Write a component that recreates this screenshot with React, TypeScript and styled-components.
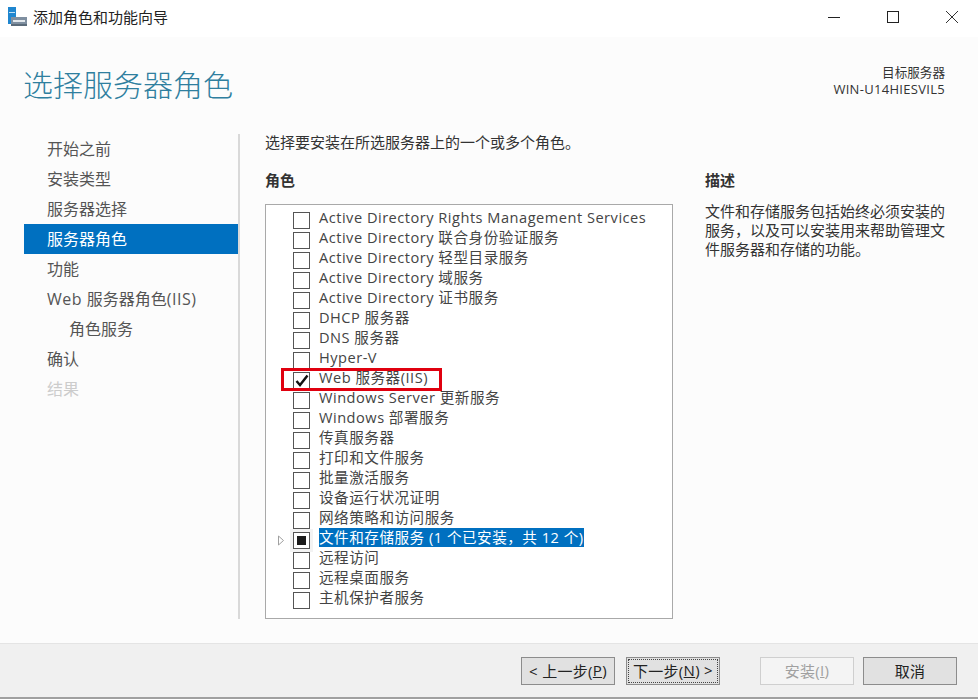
import React from "react";
import styled, { createGlobalStyle } from "styled-components";

const Global = createGlobalStyle`
  html, body { margin: 0; padding: 0; background: #fff; }
  body { font-family: "Open Sans", "Noto Sans CJK SC", sans-serif; color: #333; }
`;
const Windowed = styled.div`
  width: 978px; height: 699px; display: flex; flex-direction: column; overflow: hidden;
`;
const TitleBar = styled.div`
  height: 37px; flex: none; background: #fff; display: flex; align-items: center; gap: 15px; padding: 0 4px 3px 8px; box-sizing: border-box;
`;
const TitleText = styled.span`
  font-size: 15px; color: #222; margin-left: -10px; flex: 1; margin-top: -1px;
`;
const WinButton = styled.div`
  width: 44px; height: 30px; display: flex; align-items: center; justify-content: center;
`;
const Body = styled.div`
  flex: 1; min-height: 0; background: #fcfcfc; display: flex; flex-direction: column; padding: 0 33px 24px 24px;
`;
const Header = styled.div`
  height: 97px; flex: none; display: flex; justify-content: space-between; align-items: flex-start;
`;
const Heading = styled.h1`
  margin: 30px 0 0 -1px; font-size: 30px; font-weight: 300; line-height: 36px; color: #2f7f9f;
`;
const Target = styled.div`
  margin-top: 27px; text-align: right; line-height: 17px; color: #333;
`;
const TargetLabel = styled.div`
  font-size: 12.6px;
`;
const TargetName = styled.div`
  font-size: 13px; letter-spacing: 0.3px;
`;
const Side = styled.nav`
  width: 216px; flex: none; box-sizing: border-box; border-right: 2px solid #d9d9d9;
`;
const Columns = styled.div`
  flex: 1; min-height: 0; display: flex;
`;
const SideItem = styled.div<{ $active?: boolean; $disabled?: boolean; $indent?: boolean }>`
  height: 30px; width: 214px; line-height: 30px; font-size: 16px; box-sizing: border-box;
  padding-left: ${(p) => (p.$indent ? 45 : 23)}px;
  background: ${(p) => (p.$active ? "#0070c0" : "transparent")};
  color: ${(p) => (p.$active ? "#fff" : p.$disabled ? "#ccc" : "#555")};
`;
const Latin = styled.span`
  letter-spacing: 0.5px;
`;
const Main = styled.div`
  width: 408px; margin-left: 25px; flex: none; display: flex; flex-direction: column;
`;
const Intro = styled.div`
  font-size: 15px; line-height: 20px; color: #333; margin-bottom: 18px; margin-top: -2px;
`;
const Label = styled.div`
  font-size: 15px; font-weight: 700; line-height: 20px; color: #333;
`;
const ListBox = styled.div`
  position: relative; margin-top: 14px; flex: 1; border: 1px solid #a9a9a9; background: #fff; box-sizing: border-box; padding-top: 4px;
`;
const Row = styled.div`
  height: 20px; display: flex; align-items: center; position: relative; padding-left: 27px;
`;
const Check = styled.span<{ $hover?: boolean }>`
  width: 17px; height: 17px; flex: none; box-sizing: border-box; border: 1px solid #555; background: #fff;
  display: flex; align-items: center; justify-content: center; margin: 2px 9px 0 0;
  ${(p) => (p.$hover ? "box-shadow: 0 0 0 3px #f3f3f3;" : "")}
`;
const Square = styled.span`
  width: 9px; height: 9px; background: #1a1a1a;
`;
const RowText = styled.span<{ $sel?: boolean }>`
  font-size: 14.6px; letter-spacing: 0.5px; line-height: 19px; white-space: nowrap; margin-bottom: 4px;
  color: ${(p) => (p.$sel ? "#fff" : "#444")};
  background: ${(p) => (p.$sel ? "#0070c0" : "transparent")};
`;
const Arrow = styled.svg`
  position: absolute; left: 11px; top: 6px;
`;
const Mark = styled.div`
  position: absolute; left: 15px; top: 163px; width: 161px; height: 23px; box-sizing: border-box; border: 3px solid #e0000f;
`;
const Desc = styled.div`
  flex: 1; margin-left: 32px; padding-top: 36px;
`;
const DescText = styled.p`
  margin: 12px 0 0; font-size: 15px; line-height: 19px; color: #333; width: 245px;
`;
const Footer = styled.div`
  height: 56px; flex: none; box-sizing: border-box; background: #f0f0f0; border-top: 1px solid #e4e4e4; border-bottom: 2px solid #a0a0a0;
  display: flex; align-items: flex-start; padding: 13px 22px 0 521px;
`;
const Btn = styled.div<{ $disabled?: boolean; $focus?: boolean; $gap?: number }>`
  width: 94px; height: 28px; flex: none; box-sizing: border-box; margin-right: ${(p) => p.$gap ?? 0}px; padding-bottom: 2px;
  background: ${(p) => (p.$disabled ? "#f4f4f4" : "#e1e1e1")};
  border: 1px solid ${(p) => (p.$disabled ? "#cfcfcf" : "#8c8c8c")};
  color: ${(p) => (p.$disabled ? "#a0a0a0" : "#222")};
  font-size: 15px; letter-spacing: 0.3px; display: flex; align-items: center; justify-content: center; white-space: pre;
  ${(p) => (p.$focus ? "outline: 1px dotted #444; outline-offset: -3px;" : "")}
`;
const Key = styled.span`
  text-decoration: underline;
`;

const AppIcon = () => (
  <svg width="20" height="20" viewBox="0 0 20 20">
    <rect x="0" y="0" width="8" height="17" fill="#1f86cf" />
    <rect x="1" y="5" width="6" height="1" fill="#bfe0f5" />
    <rect x="3" y="10" width="16" height="9" fill="#7f8fa0" />
    <rect x="5" y="13" width="12" height="2" fill="#e3e8ec" />
    <rect x="3" y="17" width="16" height="2" fill="#5b6b7a" />
  </svg>
);

const names = [
  "Active Directory Rights Management Services",
  "Active Directory 联合身份验证服务",
  "Active Directory 轻型目录服务",
  "Active Directory 域服务",
  "Active Directory 证书服务",
  "DHCP 服务器",
  "DNS 服务器",
  "Hyper-V",
  "Web 服务器(IIS)",
  "Windows Server 更新服务",
  "Windows 部署服务",
  "传真服务器",
  "打印和文件服务",
  "批量激活服务",
  "设备运行状况证明",
  "网络策略和访问服务",
  "文件和存储服务 (1 个已安装，共 12 个)",
  "远程访问",
  "远程桌面服务",
  "主机保护者服务",
];

export default function App() {
  return (
    <Windowed>
      <Global />
      <TitleBar>
        <AppIcon />
        <TitleText>添加角色和功能向导</TitleText>
        <WinButton>
          <svg width="14" height="14" viewBox="0 0 14 14"><path d="M1 7.5h12" stroke="#222" fill="none" /></svg>
        </WinButton>
        <WinButton>
          <svg width="14" height="14" viewBox="0 0 14 14"><rect x="1.5" y="1.5" width="11" height="11" stroke="#222" fill="none" /></svg>
        </WinButton>
        <WinButton>
          <svg width="14" height="14" viewBox="0 0 14 14"><path d="M1 1l12 12M13 1L1 13" stroke="#333" fill="none" /></svg>
        </WinButton>
      </TitleBar>
      <Body>
        <Header>
          <Heading>选择服务器角色</Heading>
          <Target>
            <TargetLabel>目标服务器</TargetLabel>
            <TargetName>WIN-U14HIESVIL5</TargetName>
          </Target>
        </Header>
        <Columns>
          <Side>
            <SideItem>开始之前</SideItem>
            <SideItem>安装类型</SideItem>
            <SideItem>服务器选择</SideItem>
            <SideItem $active>服务器角色</SideItem>
            <SideItem>功能</SideItem>
            <SideItem><Latin>Web </Latin>服务器角色<Latin>(IIS)</Latin></SideItem>
            <SideItem $indent>角色服务</SideItem>
            <SideItem>确认</SideItem>
            <SideItem $disabled>结果</SideItem>
          </Side>
          <Main>
            <Intro>选择要安装在所选服务器上的一个或多个角色。</Intro>
            <Label>角色</Label>
            <ListBox>
              {names.map((n, i) => (
                <Row key={n}>
                  {i === 16 && (
                    <Arrow width="8" height="11" viewBox="0 0 8 11">
                      <path d="M1.5 1l5 4.5-5 4.5z" fill="#fff" stroke="#a0a0a0" />
                    </Arrow>
                  )}
                  <Check $hover={i === 16}>
                    {i === 8 && (
                      <svg width="14" height="13" viewBox="0 0 14 13">
                        <path d="M1.5 7l3.5 4 7.5-9.5" stroke="#111" strokeWidth="2.4" fill="none" />
                      </svg>
                    )}
                    {i === 16 && <Square />}
                  </Check>
                  <RowText $sel={i === 16}>{n}</RowText>
                </Row>
              ))}
              <Mark />
            </ListBox>
          </Main>
          <Desc>
            <Label>描述</Label>
            <DescText>文件和存储服务包括始终必须安装的服务，以及可以安装用来帮助管理文件服务器和存储的功能。</DescText>
          </Desc>
        </Columns>
      </Body>
      <Footer>
        <Btn $gap={11}>&lt; 上一步(<Key>P</Key>)</Btn>
        <Btn $focus $gap={40}>下一步(<Key>N</Key>) &gt;</Btn>
        <Btn $disabled $gap={9}>安装(<Key>I</Key>)</Btn>
        <Btn>取消</Btn>
      </Footer>
    </Windowed>
  );
}
